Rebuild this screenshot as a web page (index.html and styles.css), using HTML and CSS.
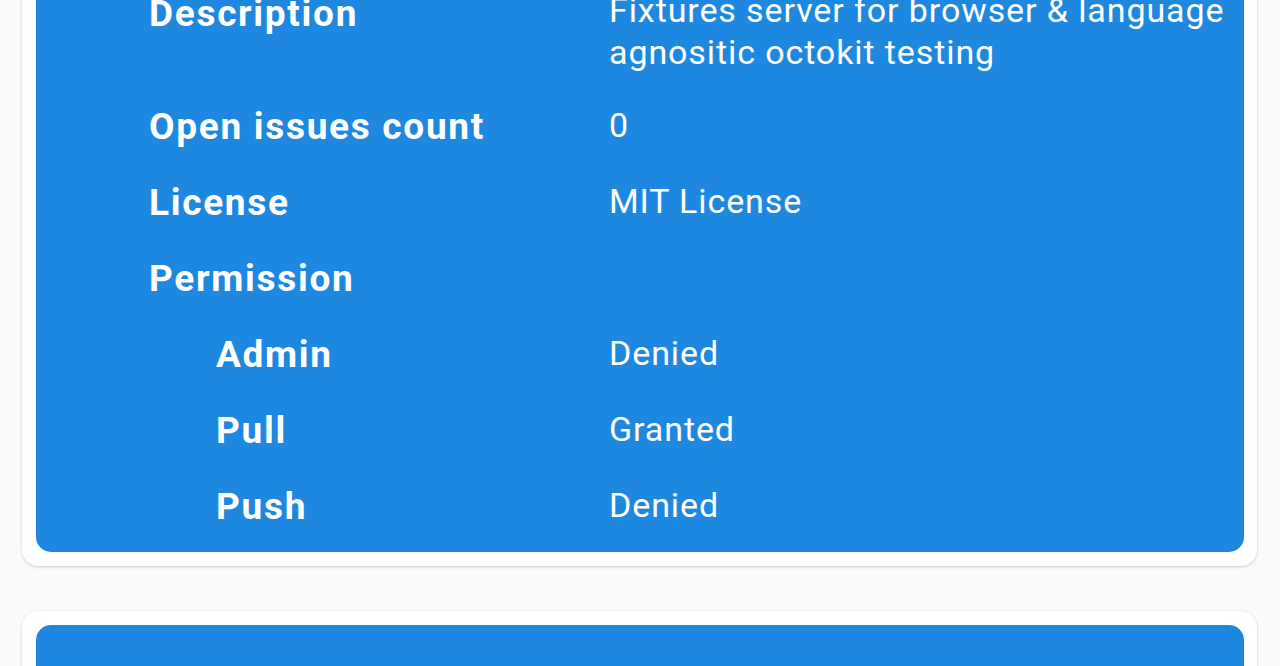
FILE: index.html
```html
<!DOCTYPE html>
<html lang="en">
<head>
<meta charset="utf-8">
<title>Repository details</title>
<link rel="stylesheet" href="styles.css">
</head>
<body>
<main class="list">
  <section class="card">
    <div class="panel">
      <div class="row">
        <div class="label">Description</div>
        <div class="value">Fixtures server for browser &amp; language agnositic octokit testing</div>
      </div>
      <div class="row">
        <div class="label">Open issues count</div>
        <div class="value">0</div>
      </div>
      <div class="row">
        <div class="label">License</div>
        <div class="value">MIT License</div>
      </div>
      <div class="row">
        <div class="label">Permission</div>
        <div class="value"></div>
      </div>
      <div class="row sub">
        <div class="label">Admin</div>
        <div class="value">Denied</div>
      </div>
      <div class="row sub">
        <div class="label">Pull</div>
        <div class="value">Granted</div>
      </div>
      <div class="row sub">
        <div class="label">Push</div>
        <div class="value">Denied</div>
      </div>
    </div>
  </section>
  <section class="card">
    <div class="panel panel-next"></div>
  </section>
</main>
</body>
</html>
```
FILE: styles.css
```css
html, body {
  margin: 0;
  padding: 0;
  background: #fafafa;
  height: 666px;
  overflow: hidden;
}

body {
  font-family: Roboto, "Liberation Sans", Arial, sans-serif;
  color: #ffffff;
}

.list {
  display: flex;
  flex-direction: column;
  gap: 45px;
  margin-top: -48px;
  padding: 0 23px 0 22px;
}

.card {
  background: #ffffff;
  border-radius: 16px;
  padding: 14px 13px 14px 14px;
  box-shadow: 0 1px 3px rgba(0, 0, 0, 0.18), 0 0 1px rgba(0, 0, 0, 0.08);
}

.panel {
  background: #1e88e0;
  border-radius: 15px;
  padding: 8px 6px 7px 113px;
}

.panel-next {
  height: 200px;
}

.row {
  display: grid;
  grid-template-columns: 460px 1fr;
  align-items: start;
  padding: 16px 0;
}

.label {
  font-size: 37px;
  font-weight: 700;
  line-height: 44px;
  letter-spacing: 1.7px;
}

.value {
  font-size: 34px;
  font-weight: 400;
  line-height: 41.5px;
  letter-spacing: 0.9px;
}

.row:first-child .label {
  padding-top: 2px;
}

.sub .label {
  padding-left: 67px;
}
```
